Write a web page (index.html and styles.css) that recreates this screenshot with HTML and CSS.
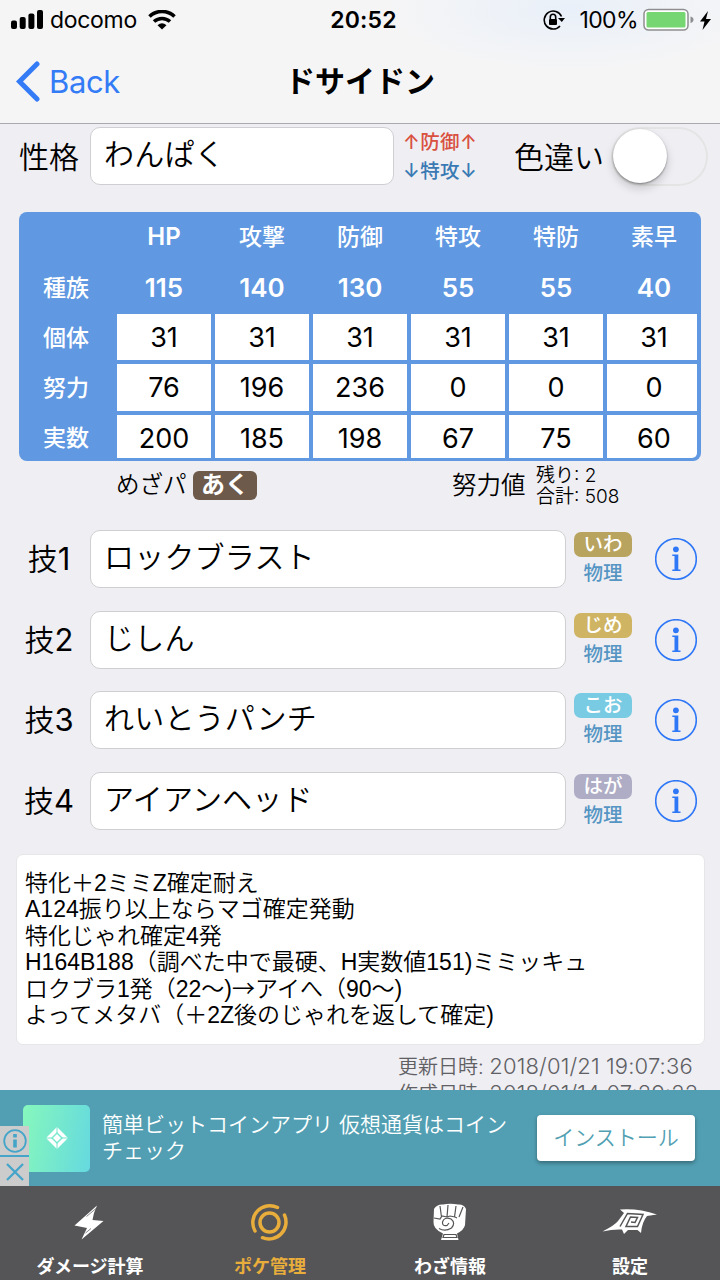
FILE: index.html
```html
<!DOCTYPE html>
<html lang="ja">

<head>
    <meta charset="UTF-8">
    <meta name="viewport" content="width=device-width, initial-scale=1.0">
    <title>ドサイドン</title>
    <link rel="stylesheet" href="styles.css">
</head>

<body>
    <header>
        <div class="status">
            <div class="status-left">
                <svg class="signal" width="33" height="20" viewBox="0 0 33 20">
                    <rect x="0" y="10.500" width="6" height="8.500" rx="2" />
                    <rect x="8.700" y="7" width="6" height="12" rx="2" />
                    <rect x="17.400" y="3.500" width="6" height="15.500" rx="2" />
                    <rect x="26" y="0" width="6" height="19" rx="2" />
                </svg>
                <span class="carrier">docomo</span>
                <svg width="28" height="20" viewBox="0 0 28 20" fill="none" stroke="#000" stroke-width="3.600">
                    <path d="M1.500 6.500a18 18 0 0 1 25 0M6 11.500a12 12 0 0 1 16 0" />
                    <path d="M9.500 15.200Q14 11.500 18.500 15.200L14 19.500z" fill="#000" stroke="none" />
                </svg>
            </div>
            <span class="time">20:52</span>
            <div class="status-right">
                <svg width="22" height="22" viewBox="0 0 22 22" fill="none" stroke="#000" stroke-width="1.600">
                    <path d="M18.500 7.500A9 9 0 1 0 17 17" />
                    <path d="M7.300 10V8a2.700 2.700 0 0 1 5.400 0v2" />
                    <rect x="6" y="10" width="8" height="6" rx="1" fill="#000" stroke="none" />
                    <path d="M15 9h7l-3.200 4z" fill="#000" stroke="none" />
                </svg>
                <span class="percent">100%</span>
                <svg width="51" height="24" viewBox="0 0 51 24">
                    <rect x="1" y="1.500" width="44" height="20.500" rx="4.500" fill="#fff" stroke="#8e8e90" stroke-width="1.500" />
                    <rect x="3.500" y="4" width="39" height="15.500" rx="1.500" fill="#76d672" />
                    <path d="M47.500 8.500q3 .8 3 3.200t-3 3.200z" fill="#8e8e90" />
                </svg>
                <svg class="charge" width="11" height="19" viewBox="0 0 11 19">
                    <path d="M8 0L0 10.500h4.500L2.500 19 11 8H6z" />
                </svg>
            </div>
        </div>
        <div class="nav">
            <div class="back">
                <svg width="24" height="41" viewBox="0 0 24 41" fill="none" stroke="#347bf6" stroke-width="5" stroke-linecap="round">
                    <path d="M21 3L3.500 20.500 21 38" stroke-linejoin="miter" />
                </svg>
                <span>Back</span>
            </div>
            <h1>ドサイドン</h1>
        </div>
    </header>

    <main>
        <div class="nature">
            <label class="nature-label">性格</label>
            <div class="field nature-field">わんぱく</div>
            <div class="effect">
                <span class="up">↑防御↑</span>
                <span class="down">↓特攻↓</span>
            </div>
            <label class="shiny">色違い</label>
            <div class="switch"><i></i></div>
        </div>

        <div class="stats">
            <b></b><b class="num hp">HP</b><b>攻撃</b><b>防御</b><b>特攻</b><b>特防</b><b class="last">素早</b>
            <b>種族</b><b class="num">115</b><b class="num">140</b><b class="num">130</b><b class="num">55</b><b class="num">55</b><b class="num last">40</b>
            <b>個体</b><span>31</span><span>31</span><span>31</span><span>31</span><span>31</span><span class="last">31</span>
            <b>努力</b><span>76</span><span>196</span><span>236</span><span>0</span><span>0</span><span class="last">0</span>
            <b>実数</b><span>200</span><span>185</span><span>198</span><span>67</span><span>75</span><span class="last">60</span>
        </div>

        <div class="sub">
            <span class="hidden-power">めざパ</span>
            <span class="type aku">あく</span>
            <span class="effort">努力値</span>
            <div class="total">
                <span>残り: 2</span>
                <span>合計: 508</span>
            </div>
        </div>

        <div class="moves">
            <div class="move">
                <label>技<span>1</span></label>
                <div class="field">ロックブラスト</div>
                <div class="kind"><span class="type iwa">いわ</span><em>物理</em></div>
                <svg class="info" viewBox="0 0 42 42">
                    <circle cx="21" cy="21" r="20.300" />
                    <path d="M17.300 16.500h6v15h2.200v1.500h-8.200v-1.500h2.200V18h-2.200z" />
                    <circle class="dot" cx="20.900" cy="11.300" r="2.900" />
                </svg>
            </div>
            <div class="move">
                <label>技<span>2</span></label>
                <div class="field">じしん</div>
                <div class="kind"><span class="type jime">じめ</span><em>物理</em></div>
                <svg class="info" viewBox="0 0 42 42">
                    <circle cx="21" cy="21" r="20.300" />
                    <path d="M17.300 16.500h6v15h2.200v1.500h-8.200v-1.500h2.200V18h-2.200z" />
                    <circle class="dot" cx="20.900" cy="11.300" r="2.900" />
                </svg>
            </div>
            <div class="move">
                <label>技<span>3</span></label>
                <div class="field">れいとうパンチ</div>
                <div class="kind"><span class="type koo">こお</span><em>物理</em></div>
                <svg class="info" viewBox="0 0 42 42">
                    <circle cx="21" cy="21" r="20.300" />
                    <path d="M17.300 16.500h6v15h2.200v1.500h-8.200v-1.500h2.200V18h-2.200z" />
                    <circle class="dot" cx="20.900" cy="11.300" r="2.900" />
                </svg>
            </div>
            <div class="move">
                <label>技<span>4</span></label>
                <div class="field">アイアンヘッド</div>
                <div class="kind"><span class="type haga">はが</span><em>物理</em></div>
                <svg class="info" viewBox="0 0 42 42">
                    <circle cx="21" cy="21" r="20.300" />
                    <path d="M17.300 16.500h6v15h2.200v1.500h-8.200v-1.500h2.200V18h-2.200z" />
                    <circle class="dot" cx="20.900" cy="11.300" r="2.900" />
                </svg>
            </div>
        </div>

        <div class="memo">
            <p>特化＋2ミミZ確定耐え</p>
            <p>A124振り以上ならマゴ確定発動</p>
            <p>特化じゃれ確定4発</p>
            <p>H164B188（調べた中で最硬、H実数値151)ミミッキュ</p>
            <p>ロクブラ1発（22〜)<span class="arrow">→</span>アイへ（90〜)</p>
            <p>よってメタバ（＋2Z後のじゃれを返して確定)</p>
        </div>

        <div class="dates">
            <p>更新日時: <span>2018/01/21 19:07:36</span></p>
            <p>作成日時: <span>2018/01/14 07:29:22</span></p>
        </div>
    </main>

    <section class="ad">
        <div class="ad-icon">
            <svg width="22" height="22" viewBox="0 0 22 22" fill="none" stroke="#fff" stroke-width="3.600">
                <path d="M11 2.500L19.500 11 11 19.500 2.500 11z" />
                <path d="M11 7L15 11 11 15 7 11z" fill="#fff" stroke="none" />
                <path d="M11 0v6M11 16v6M0 11h6M16 11h6" stroke="#76e6cc" stroke-width="1" />
            </svg>
        </div>
        <div class="ad-text">
            <p>簡単ビットコインアプリ 仮想通貨はコイン</p>
            <p>チェック</p>
        </div>
        <div class="install">インストール</div>
        <div class="ad-marks">
            <div>
                <svg width="24" height="24" viewBox="0 0 24 24" fill="none" stroke="#45a5c9" stroke-width="1.800">
                    <circle cx="12" cy="12" r="10.800" />
                    <path d="M12 10.500v8M12 5v3.600" stroke-width="3.600" />
                </svg>
            </div>
            <div>
                <svg width="24" height="24" viewBox="0 0 24 24" fill="none" stroke="#45a5c9" stroke-width="2.300">
                    <path d="M4 4l16 16M20 4L4 20" />
                </svg>
            </div>
        </div>
    </section>

    <footer>
        <div class="tab">
            <svg width="60" height="40" viewBox="0 0 60 40" fill="#fff">
                <path d="M37 2.500L14.500 22.500 27 25 21.500 36.500 43.500 18 32.500 17 34 10z" />
                <path d="M26.500 13.500L36 5.500M25.500 30L31 25.500" stroke="#555557" stroke-width=".7" />
            </svg>
            <span>ダメージ計算</span>
        </div>
        <div class="tab active">
            <svg width="60" height="40" viewBox="0 0 60 40" fill="none" stroke="#e9ad3c" stroke-width="3.500" stroke-linecap="round">
                <circle cx="29.500" cy="19.500" r="9.500" />
                <path d="M37.500 4.500A17 17 0 0 0 15 28M22.500 34.700A17 17 0 0 0 44.500 12" />
            </svg>
            <span>ポケ管理</span>
        </div>
        <div class="tab">
            <svg width="60" height="40" viewBox="0 0 60 40">
                <path fill="#fff" d="M14 6Q17 1 23 1.500 30 0 38 1.500 44 1 46 6L45 22Q44 27 37 30.500L38.500 37H21L23 30.500Q13 26 13.500 19z" />
                <g fill="none" stroke="#555557" stroke-width="1.200">
                    <path d="M20 3l1.500 11M28 2l-1 12M36 3l-1.500 11M43 4l-4 10M14 15l6 1 2-3 5 1 3-1 5 1 2 1" />
                    <path d="M19 25.500Q25 29 31.500 25 36 20 31 16 24 13.500 22.500 19 22 23.500 27 22.500L29 20M24 31.500h12l1 3H23z" />
                </g>
            </svg>
            <span>わざ情報</span>
        </div>
        <div class="tab">
            <svg width="60" height="40" viewBox="0 0 60 40">
                <path fill="#fff" d="M20 6.500Q38 5 57 11.500Q49 12.500 47 13 42 19 41 30L37.500 27 28 27 24 31 22 26.500Q13 26 2.500 28.500Q15 22 18 18L24 10z" />
                <path fill="none" stroke="#555557" stroke-width="1.500" d="M20 23.500L27.500 10.500 43 11.500 37.500 23.500 26 23.500 30.500 14 37.500 14.500 35 19.500 31 19" />
            </svg>
            <span>設定</span>
        </div>
    </footer>
</body>

</html>
```

FILE: styles.css
```css
* {
    margin: 0;
    padding: 0;
    box-sizing: border-box;
}

body {
    width: 720px;
    height: 1280px;
    overflow: hidden;
    display: flex;
    flex-direction: column;
    background-color: #efeef3;
    color: #000;
    font-family: Inter, "Noto Sans CJK JP", sans-serif;
    font-weight: 350;
    white-space: nowrap;
}

svg {
    flex: none;
    display: block;
}

header {
    height: 124px;
    flex: none;
    background: radial-gradient(ellipse 180px 60px at 570px 10px, #e9f0f9, #f5f5f6);
    border-bottom: 1px solid #a9a9ae;
}

.status {
    height: 40px;
    display: grid;
    grid-template-columns: 1fr auto 1fr;
    align-items: center;
    padding: 0 9px 0 11px;
    font-size: 23px;
    font-weight: 400;
}

.status-left,
.status-right {
    display: flex;
    align-items: center;
}

.status-right {
    justify-content: flex-end;
}

.carrier {
    margin: 0 11px 0 6px;
    letter-spacing: -.3px;
}

.time {
    padding-left: 5px;
    font-weight: 600;
    letter-spacing: .2px;
}

.percent {
    margin: 0 5px 0 14px;
    letter-spacing: -.6px;
}

.charge {
    margin-left: 6px;
}

.nav {
    height: 83px;
    display: grid;
    grid-template-columns: 1fr auto 1fr;
    align-items: center;
    padding: 0 16px;
}

.back {
    display: flex;
    align-items: center;
    gap: 9px;
    color: #347bf6;
    font-size: 31px;
    font-weight: 400;
    letter-spacing: -.4px;
}

.back span {
    padding-bottom: 1px;
}

h1 {
    padding-bottom: 6px;
    font-size: 30px;
    font-weight: 700;
}

main {
    flex: 1;
    overflow: hidden;
}

.field {
    height: 58px;
    border: 1px solid #cfcfd2;
    border-radius: 10px;
    background-color: #fff;
    padding-left: 13px;
    font-size: 30px;
    line-height: 53px;
    letter-spacing: .2px;
}

.nature {
    display: flex;
    align-items: center;
    height: 64px;
    padding: 0 12px 0 19px;
}

.nature-label {
    width: 71px;
    padding-bottom: 2px;
    font-size: 30px;
}

.nature-field {
    width: 304px;
}

.effect {
    width: 92px;
    margin-left: 9px;
    padding-top: 2px;
    display: flex;
    flex-direction: column;
    font-size: 19.500px;
    font-weight: 500;
    line-height: 29px;
    letter-spacing: .4px;
}

.up {
    color: #d95040;
}

.down {
    color: #397ab4;
}

.shiny {
    width: 97px;
    margin-left: 19px;
    padding-bottom: 2px;
    font-size: 30px;
}

.switch {
    width: 97px;
    height: 59px;
    border: 2px solid #e4e4e5;
    border-radius: 30px;
}

.switch i {
    display: block;
    width: 54px;
    height: 54px;
    border-radius: 50%;
    background-color: #fff;
    box-shadow: 0 1px 2px rgba(0, 0, 0, .4), 0 5px 10px rgba(0, 0, 0, .18);
}

/* 種族値・個体値・努力値・実数値 */
.stats {
    display: grid;
    grid-template-columns: 94px repeat(5, 94px) 90px;
    grid-template-rows: 48px 46px 46px 46.500px 43.500px;
    gap: 4px;
    width: 682px;
    height: 249px;
    margin: 24px 0 0 19px;
    border-radius: 8px;
    background-color: #6098e2;
    overflow: hidden;
}

.stats b,
.stats span {
    display: flex;
    align-items: center;
    justify-content: center;
    padding-top: 2px;
}

.stats b {
    padding-bottom: 4px;
    color: #fff;
    font-size: 23px;
    font-weight: 500;
}

.stats .num {
    padding-bottom: 2px;
    font-size: 26px;
    font-weight: 600;
}

.stats .hp {
    font-size: 24px;
}

.stats span {
    padding-top: 1px;
    background-color: #fff;
    font-size: 27px;
    font-weight: 400;
}

.stats .last {
    padding-left: 4px;
}

.stats b:nth-child(n+29),
.stats span:nth-child(n+30) {
    padding-top: 4px;
}

.stats span:last-child {
    border-bottom-right-radius: 5px;
}

.sub {
    display: flex;
    align-items: center;
    height: 48px;
    padding-left: 116px;
    font-size: 23.500px;
}

.hidden-power,
.effort {
    padding-bottom: 4px;
}

.hidden-power {
    width: 77px;
}

.type {
    display: block;
    color: #fff;
    font-weight: 600;
    text-align: center;
}

.aku {
    width: 64px;
    height: 29px;
    border-radius: 6px;
    background-color: #6d5a4b;
    font-size: 24px;
    line-height: 27px;
}

.effort {
    width: 83px;
    margin-left: 195px;
    font-size: 24.500px;
}

.total {
    display: flex;
    flex-direction: column;
    margin-left: 1px;
    padding-top: 1px;
    font-size: 19px;
    line-height: 21px;
}

.moves {
    display: flex;
    flex-direction: column;
    gap: 22.600px;
    padding-top: 21.300px;
}

.move {
    display: flex;
    align-items: center;
    height: 58px;
}

.move label {
    width: 90px;
    padding: 0 0 4px 8px;
    text-align: center;
    font-size: 30px;
}

.move label span {
    font-size: 31px;
    font-weight: 400;
}

.move .field {
    width: 476px;
}

.kind {
    width: 58px;
    margin-left: 8px;
    padding-top: 3px;
    font-size: 19.500px;
    text-align: center;
}

.kind .type {
    height: 25px;
    border-radius: 7px;
    line-height: 25px;
    font-weight: 500;
}

.kind em {
    display: block;
    color: #5595c3;
    font-style: normal;
    font-weight: 500;
    line-height: 32px;
}

.iwa {
    background-color: #b8a45f;
}

.jime {
    background-color: #cfb463;
}

.koo {
    background-color: #78cbe2;
}

.haga {
    background-color: #aeadc5;
}

.info {
    width: 42px;
    height: 42px;
    margin-left: 23px;
    fill: #2e77f6;
}

.info circle {
    fill: none;
    stroke: #2e77f6;
    stroke-width: 1.600;
}

.info .dot {
    fill: #2e77f6;
    stroke: none;
}

.memo {
    width: 689px;
    height: 191px;
    margin: 23.500px 0 0 15.500px;
    padding: 15px 8.500px;
    border: 1px solid #e6e6e9;
    border-radius: 7px;
    background-color: #fff;
    font-family: "Liberation Sans", "Noto Sans CJK JP", sans-serif;
    font-size: 23px;
    line-height: 26.500px;
}

.arrow {
    font-family: "Noto Sans CJK JP", sans-serif;
    line-height: 1;
}

.dates {
    padding: 8px 27px 0 398px;
    color: #606064;
    font-size: 20px;
    line-height: 26px;
}

.dates span {
    font-size: 22px;
    letter-spacing: .15px;
}

.ad {
    position: relative;
    flex: none;
    display: flex;
    align-items: center;
    height: 96px;
    padding-left: 23px;
    background-color: #529fb3;
    color: #fff;
}

.ad-icon {
    width: 67px;
    height: 67px;
    display: flex;
    align-items: center;
    justify-content: center;
    border-radius: 5px;
    background: linear-gradient(100deg, #86f7bc, #65d9df);
}

.ad-text {
    width: 435px;
    margin-left: 12px;
    font-size: 21px;
    line-height: 26px;
}

.install {
    width: 158px;
    height: 46px;
    border-radius: 4px;
    background-color: #fff;
    box-shadow: 0 2px 4px rgba(0, 0, 0, .35);
    color: #529fb3;
    font-size: 21px;
    line-height: 45px;
    text-align: center;
}

.ad-marks {
    position: absolute;
    left: 0;
    bottom: 0;
    display: flex;
    flex-direction: column;
    gap: 2px;
    background-color: #45a5c9;
}

.ad-marks div {
    width: 29px;
    height: 29px;
    display: flex;
    align-items: center;
    justify-content: center;
    background-color: #ccc;
}

footer {
    flex: none;
    display: flex;
    height: 94px;
    background-color: #555557;
    color: #fff;
}

.tab {
    width: 180px;
    display: flex;
    flex-direction: column;
    align-items: center;
    padding-top: 17px;
    font-size: 18px;
    font-weight: 700;
}

.tab span {
    margin-top: 9px;
}

.active {
    color: #e9ad3c;
}
```
